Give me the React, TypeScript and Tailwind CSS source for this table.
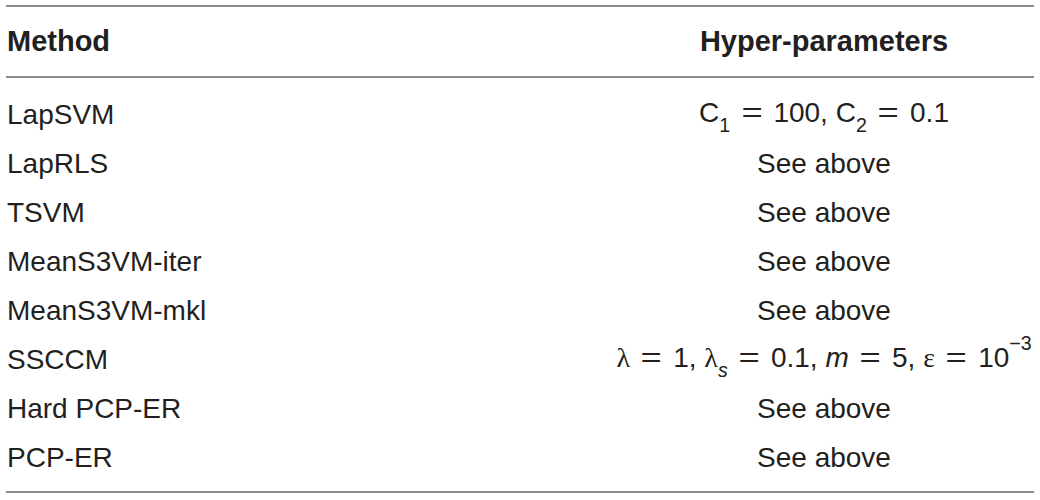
const Eq = () => <span className="inline-block mx-[0.48em] scale-x-[1.3]">=</span>;

const rows: { name: string; params: React.ReactNode }[] = [
  {
    name: "LapSVM",
    params: (
      <>
        C<sub className="text-[0.7em] align-[-0.25em] leading-none">1</sub>
        <Eq />100,{" "}
        C<sub className="text-[0.7em] align-[-0.25em] leading-none">2</sub>
        <Eq />0.1
      </>
    ),
  },
  { name: "LapRLS", params: "See above" },
  { name: "TSVM", params: "See above" },
  { name: "MeanS3VM-iter", params: "See above" },
  { name: "MeanS3VM-mkl", params: "See above" },
  {
    name: "SSCCM",
    params: (
      <>
        <span className="font-['Liberation_Serif',serif]">λ</span>
        <Eq />1,{" "}
        <span className="font-['Liberation_Serif',serif]">λ</span>
        <sub className="text-[0.7em] align-[-0.25em] leading-none italic">s</sub>
        <Eq />0.1,{" "}
        <span className="italic">m</span>
        <Eq />5,{" "}
        <span className="font-['Liberation_Serif',serif]">ε</span>
        <Eq />10
        <sup className="text-[0.7em] align-[0.35em] leading-none">−3</sup>
      </>
    ),
  },
  { name: "Hard PCP-ER", params: "See above" },
  { name: "PCP-ER", params: "See above" },
];

export default function App() {
  return (
    <div className="w-[1040px] h-[500px] bg-white px-[6px] pt-[5px] font-['Liberation_Sans',Arial,sans-serif] text-[#231f20]">
      <div className="border-t-2 border-b-2 border-[#8c8c8c]">
        <div className="grid grid-cols-[608px_1fr] h-[71px] items-center border-b-2 border-[#8c8c8c] text-[29px] font-bold">
          <div className="pl-[1px]">Method</div>
          <div className="text-center">Hyper-parameters</div>
        </div>
        <div className="pt-[12px] pb-[9px]">
          {rows.map((r) => (
            <div
              key={r.name}
              className="grid grid-cols-[608px_1fr] h-[49px] items-center text-[28px] leading-none"
            >
              <div className="pl-[1px]">{r.name}</div>
              <div className="text-center whitespace-nowrap">{r.params}</div>
            </div>
          ))}
        </div>
      </div>
    </div>
  );
}
